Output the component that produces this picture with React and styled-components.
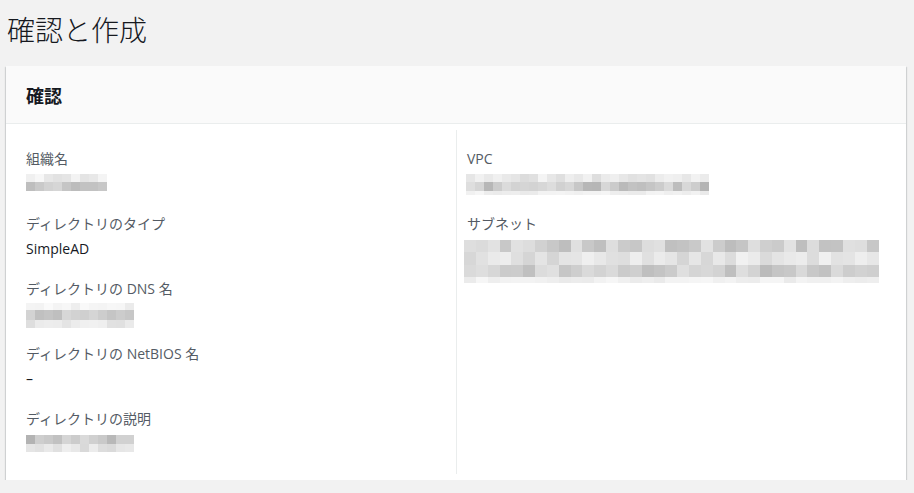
import React from "react";
import styled, { createGlobalStyle } from "styled-components";

const GlobalStyle = createGlobalStyle`
  html, body {
    margin: 0;
    padding: 0;
    background: #f2f2f2;
  }
  body {
    font-family: "Open Sans", "Noto Sans CJK JP", sans-serif;
    color: #16191f;
  }
`;

const Page = styled.div`
  padding: 12px 8px 0 6px;
`;

const PageTitle = styled.h1`
  margin: 0 0 19px 1px;
  font-family: "Noto Sans CJK JP", sans-serif;
  font-size: 28px;
  line-height: 35px;
  font-weight: 300;
  color: #16191f;
`;

const Card = styled.section`
  background: #fff;
  box-shadow: 0 1px 0 0 rgba(0, 28, 36, 0.4), 0 2px 1px 0 rgba(0, 28, 36, 0.15),
    1px 1px 1px 0 rgba(0, 28, 36, 0.12), -1px 1px 1px 0 rgba(0, 28, 36, 0.12);
`;

const CardHeader = styled.header`
  height: 57px;
  display: flex;
  align-items: center;
  padding: 0 20px;
  background: #fafafa;
  border-bottom: 1px solid #eaeded;
`;

const CardTitle = styled.h2`
  margin: 0;
  font-family: "Noto Sans CJK JP", sans-serif;
  font-size: 18px;
  font-weight: 700;
  color: #16191f;
`;

const CardBody = styled.div`
  display: grid;
  grid-template-columns: 1fr 1fr;
  padding: 6px 20px;
`;

const Column = styled.div`
  display: flex;
  flex-direction: column;
  gap: 19px;
  padding: 19px 0 19px ${(p) => (p.$divided ? "10px" : "0")};
  border-left: ${(p) => (p.$divided ? "1px solid #eaeded" : "none")};
`;

const Item = styled.div`
  display: flex;
  flex-direction: column;
  gap: 4px;
`;

const Label = styled.div`
  font-size: 14px;
  line-height: 20px;
  color: #545b64;
`;

const Value = styled.div`
  font-size: 14px;
  line-height: 22px;
  height: ${(p) => (p.$tall ? "auto" : "22px")};
  color: #16191f;
`;

const MosaicGrid = styled.div`
  display: grid;
  width: max-content;
  margin: ${(p) => p.$margin || "0"};
`;

const Cell = styled.div``;

function rng(seed) {
  let s = seed;
  return () => {
    s = (s * 9301 + 49297) % 233280;
    return s / 233280;
  };
}

// pixelated blur standing in for hidden values
function Mosaic({ seed, cols, cellW, rows, margin }) {
  const r = rng(seed);
  const cells = [];
  rows.forEach((row, ri) => {
    for (let c = 0; c < cols; c++) {
      const v = r();
      const l = Math.round(row.base + (v - 0.5) * row.spread);
      const g = Math.max(150, Math.min(250, l));
      cells.push(
        <Cell key={`${ri}-${c}`} style={{ background: `rgb(${g},${g},${g})` }} />
      );
    }
  });
  return (
    <MosaicGrid
      $margin={margin}
      style={{
        gridTemplateColumns: `repeat(${cols}, ${cellW}px)`,
        gridTemplateRows: rows.map((row) => `${row.h}px`).join(" "),
      }}
    >
      {cells}
    </MosaicGrid>
  );
}

export default function App() {
  return (
    <>
      <GlobalStyle />
      <Page>
        <PageTitle>確認と作成</PageTitle>
        <Card>
          <CardHeader>
            <CardTitle>確認</CardTitle>
          </CardHeader>
          <CardBody>
            <Column>
              <Item>
                <Label>組織名</Label>
                <Value>
                  <Mosaic
                    seed={11}
                    cols={9}
                    cellW={9}
                    margin="1px 0 0 0"
                    rows={[
                      { h: 8, base: 236, spread: 26 },
                      { h: 9, base: 196, spread: 40 },
                    ]}
                  />
                </Value>
              </Item>
              <Item>
                <Label>ディレクトリのタイプ</Label>
                <Value>SimpleAD</Value>
              </Item>
              <Item>
                <Label>ディレクトリの DNS 名</Label>
                <Value>
                  <Mosaic
                    seed={37}
                    cols={12}
                    cellW={9}
                    rows={[
                      { h: 7, base: 240, spread: 20 },
                      { h: 10, base: 196, spread: 40 },
                      { h: 8, base: 232, spread: 20 },
                    ]}
                  />
                </Value>
              </Item>
              <Item>
                <Label>ディレクトリの NetBIOS 名</Label>
                <Value>–</Value>
              </Item>
              <Item>
                <Label>ディレクトリの説明</Label>
                <Value>
                  <Mosaic
                    seed={73}
                    cols={12}
                    cellW={9}
                    margin="2px 0 0 0"
                    rows={[
                      { h: 9, base: 196, spread: 44 },
                      { h: 8, base: 228, spread: 24 },
                    ]}
                  />
                </Value>
              </Item>
            </Column>
            <Column $divided>
              <Item>
                <Label>VPC</Label>
                <Value>
                  <Mosaic
                    seed={5}
                    cols={27}
                    cellW={9}
                    margin="1px 0 0 -1px"
                    rows={[
                      { h: 8, base: 232, spread: 24 },
                      { h: 9, base: 200, spread: 48 },
                      { h: 4, base: 240, spread: 14 },
                    ]}
                  />
                </Value>
              </Item>
              <Item>
                <Label>サブネット</Label>
                <Value $tall>
                  <Mosaic
                    seed={91}
                    cols={35}
                    cellW={11.85}
                    margin="2px 0 0 -3px"
                    rows={[
                      { h: 12, base: 208, spread: 40 },
                      { h: 13, base: 226, spread: 30 },
                      { h: 12, base: 206, spread: 40 },
                      { h: 6, base: 240, spread: 12 },
                    ]}
                  />
                </Value>
              </Item>
            </Column>
          </CardBody>
        </Card>
      </Page>
    </>
  );
}
